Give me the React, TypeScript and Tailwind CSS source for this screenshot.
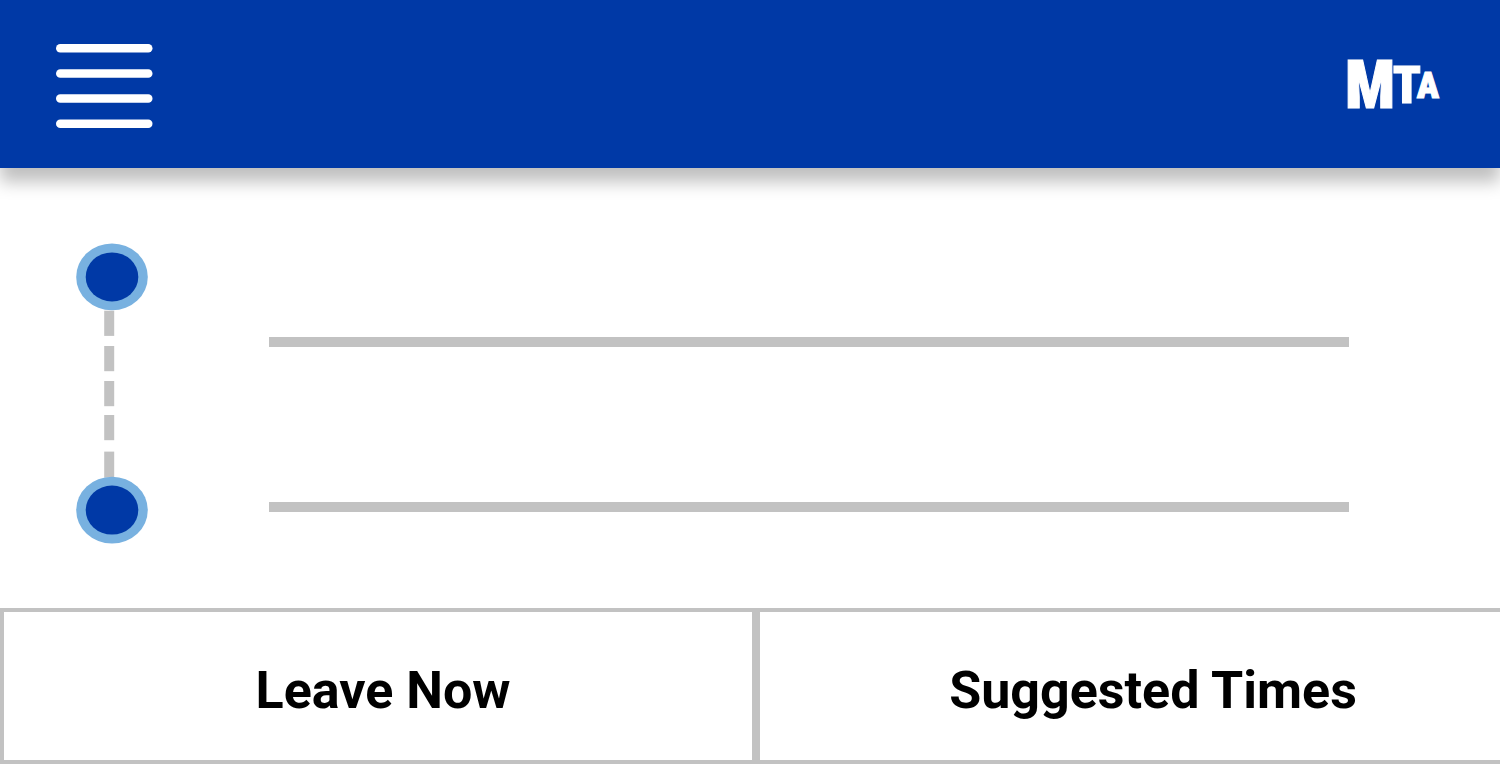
function MtaLogo() {
  return (
    <svg width="92" height="72" viewBox="0 0 92 72" role="img" aria-label="MTA" className="overflow-visible">
      <g
        fill="#fff"
        stroke="#fff"
        strokeWidth="1"
        fontFamily="'Roboto Condensed', 'Liberation Sans Narrow', Roboto, sans-serif"
        fontWeight="900"
        textAnchor="middle"
      >
        <text x="22" y="58" fontSize="66">M</text>
        <text x="59" y="53" fontSize="51">T</text>
        <text x="80" y="48" fontSize="37">A</text>
      </g>
    </svg>
  );
}

function RouteTrack() {
  return (
    <svg width="72" height="300" viewBox="0 0 72 300" aria-hidden="true" className="shrink-0 overflow-visible">
      <g fill="#c2c2c2">
        <rect x="28.2" y="66.7" width="10" height="25.2" />
        <rect x="28.2" y="102" width="10" height="25.2" />
        <rect x="28.2" y="137" width="10" height="25.2" />
        <rect x="28.2" y="171" width="10" height="25.2" />
        <rect x="28.2" y="207.6" width="10" height="26" />
      </g>
      <ellipse cx="36" cy="32.9" rx="35.8" ry="33.4" fill="#78b1e0" />
      <ellipse cx="36" cy="32.9" rx="26.3" ry="24.5" fill="#0039a6" />
      <ellipse cx="36" cy="266.1" rx="35.8" ry="33.4" fill="#78b1e0" />
      <ellipse cx="36" cy="266.1" rx="26.3" ry="24.5" fill="#0039a6" />
    </svg>
  );
}

const stopField =
  "block h-20 w-full border-b-10 border-[#c2c2c2] bg-transparent text-5xl text-black outline-none";

export default function App() {
  return (
    <div className="min-h-screen overflow-hidden bg-white font-['Roboto',sans-serif] text-black">
      <header className="flex h-42 items-center justify-between bg-[#0039a6] pt-1 pr-15 pl-14 shadow-[0_14px_16px_0_rgba(0,0,0,0.25)]">
        <button type="button" aria-label="Open menu">
          <svg width="97" height="84" viewBox="0 0 97 84" fill="#fff" aria-hidden="true">
            <rect x="0" y="0" width="96.5" height="8.5" rx="4.25" />
            <rect x="0" y="25.2" width="96.5" height="8.5" rx="4.25" />
            <rect x="0" y="50.3" width="96.5" height="8.5" rx="4.25" />
            <rect x="0" y="75.4" width="96.5" height="8.5" rx="4.25" />
          </svg>
        </button>
        <a href="#home" aria-label="MTA home">
          <MtaLogo />
        </a>
      </header>

      <main>
        <form>
          <div className="flex items-start gap-[121px] pt-19 pr-[151px] pb-16 pl-19">
            <RouteTrack />
            <div className="flex grow flex-col gap-[85px] pt-[23px]">
              <input type="text" aria-label="From" className={stopField} />
              <input type="text" aria-label="To" className={stopField} />
            </div>
          </div>

          <div className="flex h-39 text-[52px] font-bold">
            <button type="button" className="w-[50.4%] border-4 border-[#c2c2c2] pt-[10px] pl-[10px]">
              Leave Now
            </button>
            <button type="button" className="grow border-4 border-r-0 border-[#c2c2c2] pt-[10px] pl-[46px]">
              Suggested Times
            </button>
          </div>
        </form>
      </main>
    </div>
  );
}
